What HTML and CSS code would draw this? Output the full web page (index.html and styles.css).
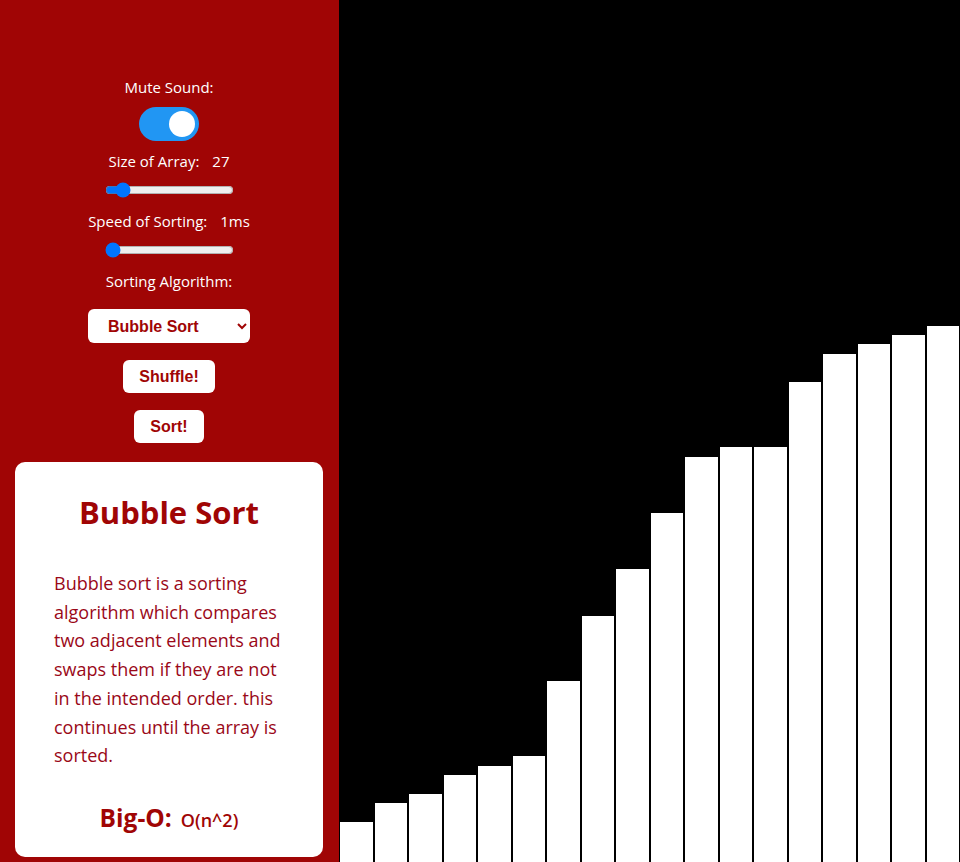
FILE: index.html
```html
<!DOCTYPE html>
<html lang="en">
<head>
<meta charset="utf-8">
<title>Sorting Visualizer</title>
<link rel="stylesheet" href="styles.css">
</head>
<body>
<div class="app">
  <aside class="sidebar">
    <div class="label label-mute">Mute Sound:</div>
    <label class="switch">
      <input type="checkbox" checked>
      <span class="slider-knob"></span>
    </label>
    <div class="label label-size">Size of Array:<span class="value">27</span></div>
    <input class="range" type="range" min="10" max="200" value="27">
    <div class="label label-speed">Speed of Sorting:<span class="value">1ms</span></div>
    <input class="range" type="range" min="1" max="500" value="1">
    <div class="label label-algo">Sorting Algorithm:</div>
    <select class="algo-select">
      <option>Bubble Sort</option>
      <option>Selection Sort</option>
      <option>Insertion Sort</option>
      <option>Merge Sort</option>
      <option>Quick Sort</option>
    </select>
    <button class="btn btn-shuffle">Shuffle!</button>
    <button class="btn btn-sort">Sort!</button>
    <section class="card">
      <h1 class="card-title">Bubble Sort</h1>
      <p class="card-text">Bubble sort is a sorting algorithm which compares two adjacent elements and swaps them if they are not in the intended order. this continues until the array is sorted.</p>
      <div class="bigo"><span class="bigo-label">Big-O:</span><span class="bigo-value">O(n^2)</span></div>
    </section>
  </aside>
  <main class="chart">
    <div class="bar" style="height:40px"></div>
    <div class="bar" style="height:59px"></div>
    <div class="bar" style="height:68px"></div>
    <div class="bar" style="height:87px"></div>
    <div class="bar" style="height:96px"></div>
    <div class="bar" style="height:106px"></div>
    <div class="bar" style="height:181px"></div>
    <div class="bar" style="height:246px"></div>
    <div class="bar" style="height:293px"></div>
    <div class="bar" style="height:349px"></div>
    <div class="bar" style="height:405px"></div>
    <div class="bar" style="height:415px"></div>
    <div class="bar" style="height:415px"></div>
    <div class="bar" style="height:480px"></div>
    <div class="bar" style="height:508px"></div>
    <div class="bar" style="height:518px"></div>
    <div class="bar" style="height:527px"></div>
    <div class="bar" style="height:536px"></div>
    <div class="bar" style="height:560px"></div>
    <div class="bar" style="height:588px"></div>
    <div class="bar" style="height:610px"></div>
    <div class="bar" style="height:642px"></div>
    <div class="bar" style="height:680px"></div>
    <div class="bar" style="height:705px"></div>
    <div class="bar" style="height:741px"></div>
    <div class="bar" style="height:776px"></div>
    <div class="bar" style="height:812px"></div>
  </main>
</div>
</body>
</html>
```

FILE: styles.css
```css
html, body {
  margin: 0;
  padding: 0;
  height: 100%;
}
body {
  font-family: "Open Sans", "Noto Sans", sans-serif;
  background: #000;
  overflow: hidden;
}
.app {
  display: flex;
  height: 862px;
}
.sidebar {
  width: 339px;
  flex-shrink: 0;
  background: #a00505;
  display: flex;
  flex-direction: column;
  align-items: center;
  box-sizing: border-box;
  padding: 0 16px 0 15px;
}
.label {
  color: #fff;
  font-size: 15px;
  line-height: 20px;
}
.value {
  margin-left: 13px;
}
.label-mute { margin-top: 77px; }
.switch {
  position: relative;
  display: block;
  width: 60px;
  height: 34px;
  margin-top: 10px;
}
.switch input {
  opacity: 0;
  width: 0;
  height: 0;
}
.slider-knob {
  position: absolute;
  inset: 0;
  background: #2196f3;
  border-radius: 34px;
}
.slider-knob::before {
  content: "";
  position: absolute;
  width: 26px;
  height: 26px;
  left: 30px;
  top: 4px;
  background: #fff;
  border-radius: 50%;
}
.label-size { margin-top: 10px; }
.range {
  width: 129px;
  margin: 11px 0 0 0;
  height: 16px;
  accent-color: #0075ff;
}
.label-speed { margin-top: 13px; }
.label-algo { margin-top: 13px; }
.algo-select {
  margin-top: 18px;
  width: 162px;
  height: 34px;
  border: none;
  border-radius: 6px;
  background: #fff;
  color: #a00505;
  font-family: "Liberation Sans", Arial, sans-serif;
  font-weight: bold;
  font-size: 16px;
  padding-left: 16px;
}
.btn {
  border: none;
  border-radius: 6px;
  background: #fff;
  color: #a00505;
  font-family: "Liberation Sans", Arial, sans-serif;
  font-weight: bold;
  font-size: 16px;
  height: 33px;
  padding: 0 16px;
}
.btn-shuffle { margin-top: 17px; }
.btn-sort { margin-top: 17px; }
.card {
  margin-top: 19px;
  align-self: stretch;
  background: #fff;
  border-radius: 10px;
  height: 395px;
  box-sizing: border-box;
  padding: 26px 39px 0 39px;
  color: #a00505;
}
.card-title {
  margin: 0;
  text-align: center;
  font-size: 31px;
  font-weight: 700;
  line-height: 48px;
}
.card-text {
  margin: 33px 0 0 0;
  font-size: 18px;
  line-height: 28.7px;
  color: #9a0818;
}
.bigo {
  margin-top: 31px;
  text-align: center;
  display: flex;
  justify-content: center;
  align-items: baseline;
  gap: 9px;
}
.bigo-label {
  font-size: 24.5px;
  font-weight: 700;
}
.bigo-value {
  font-size: 18px;
  font-weight: 600;
}
.chart {
  flex: 1;
  display: flex;
  align-items: flex-end;
  overflow: hidden;
  background: #000;
  padding-left: 0;
}
.bar {
  flex-shrink: 0;
  width: 32.5px;
  margin: 0 1px;
  background: #fff;
}
```
